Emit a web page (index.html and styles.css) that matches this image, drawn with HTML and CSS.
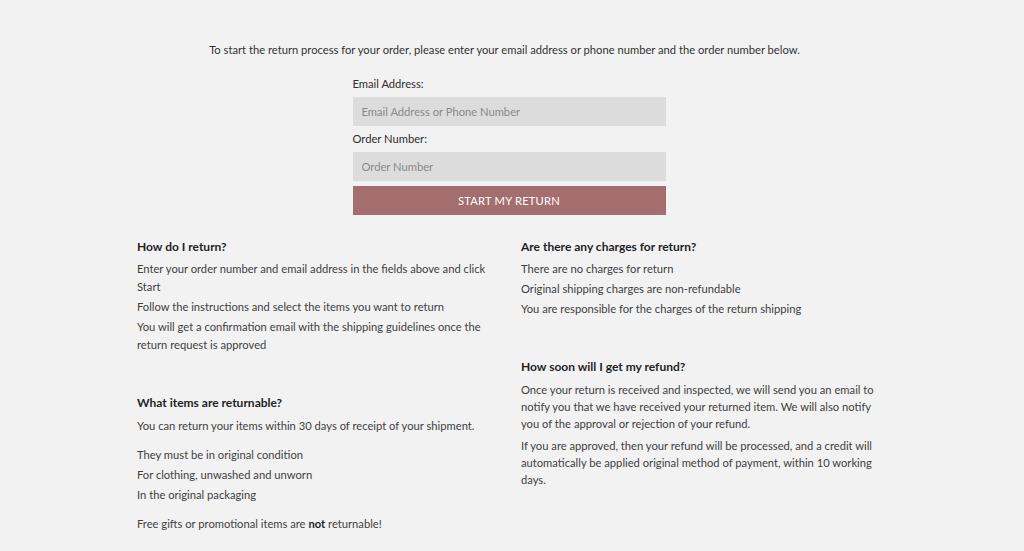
FILE: index.html
```html
<!DOCTYPE html>
<html lang="en">
<head>
<meta charset="utf-8">
<title>Start a return</title>
<link rel="stylesheet" href="styles.css">
</head>
<body>
<main class="page">
  <p class="intro">To start the return process for your order, please enter your email address or phone number and the order number below.</p>
  <form class="return-form">
    <label class="field-label" for="email">Email Address:</label>
    <input class="field-input" id="email" type="text" placeholder="Email Address or Phone Number">
    <label class="field-label" for="order">Order Number:</label>
    <input class="field-input" id="order" type="text" placeholder="Order Number">
    <button class="submit-btn" type="button">START MY RETURN</button>
  </form>
  <div class="faq">
    <div class="faq-col">
      <section class="faq-item">
        <h3>How do I return?</h3>
        <p>Enter your order number and email address in the fields above and click Start</p>
        <p>Follow the instructions and select the items you want to return</p>
        <p>You will get a confirmation email with the shipping guidelines once the return request is approved</p>
      </section>
      <section class="faq-item faq-item-lower">
        <h3>What items are returnable?</h3>
        <p class="spaced">You can return your items within 30 days of receipt of your shipment.</p>
        <p>They must be in original condition</p>
        <p>For clothing, unwashed and unworn</p>
        <p class="spaced">In the original packaging</p>
        <p>Free gifts or promotional items are <strong>not</strong> returnable!</p>
      </section>
    </div>
    <div class="faq-col">
      <section class="faq-item">
        <h3>Are there any charges for return?</h3>
        <p>There are no charges for return</p>
        <p>Original shipping charges are non-refundable</p>
        <p>You are responsible for the charges of the return shipping</p>
      </section>
      <section class="faq-item faq-item-lower">
        <h3>How soon will I get my refund?</h3>
        <p class="loose">Once your return is received and inspected, we will send you an email to notify you that we have received your returned item. We will also notify you of the approval or rejection of your refund.</p>
        <p class="loose">If you are approved, then your refund will be processed, and a credit will automatically be applied original method of payment, within 10 working days.</p>
      </section>
    </div>
  </div>
</main>
</body>
</html>
```
FILE: styles.css
```css
html, body {
  margin: 0;
  padding: 0;
  background: #f2f2f2;
}
body {
  font-family: Lato, "Open Sans", Arial, sans-serif;
  font-size: 11.2px;
  color: #3a3a3a;
}
.page {
  width: 744px;
  margin-left: calc(50% - 375px);
  padding-top: 42px;
}
.intro {
  margin: 0;
  padding-right: 9px;
  text-align: center;
  line-height: 16px;
  color: #333;
}
.return-form {
  width: 313px;
  margin: 18px auto 0;
  display: flex;
  flex-direction: column;
}
.field-label {
  line-height: 16px;
  color: #2e2e2e;
  margin-bottom: 5px;
}
.field-input {
  height: 29px;
  border: none;
  background: #dcdcdc;
  padding: 0 9px;
  font: inherit;
  color: #555;
  margin-bottom: 5px;
  outline: none;
  box-sizing: border-box;
}
.field-input::placeholder {
  color: #8a8a8a;
}
.submit-btn {
  height: 29px;
  border: none;
  background: #a36e6d;
  color: #fff;
  font: inherit;
  letter-spacing: 0.2px;
  cursor: pointer;
}
.faq {
  display: grid;
  grid-template-columns: 360px 360px;
  column-gap: 24px;
  margin-top: 24px;
}
.faq-item h3 {
  margin: 0 0 5px;
  font-size: 12px;
  font-weight: 700;
  color: #1f1f1f;
  line-height: 16px;
}
.faq-item p {
  margin: 0 0 2px;
  line-height: 18px;
  color: #3f3f3f;
}
.faq-item p.spaced {
  margin-bottom: 11px;
}
.faq-item p.loose {
  line-height: 17px;
  margin-bottom: 5px;
}
.faq-item strong {
  color: #1f1f1f;
}
.faq-item-lower {
  margin-top: 41px;
}
.faq-item-lower h3 {
  margin-bottom: 6px;
}
```
